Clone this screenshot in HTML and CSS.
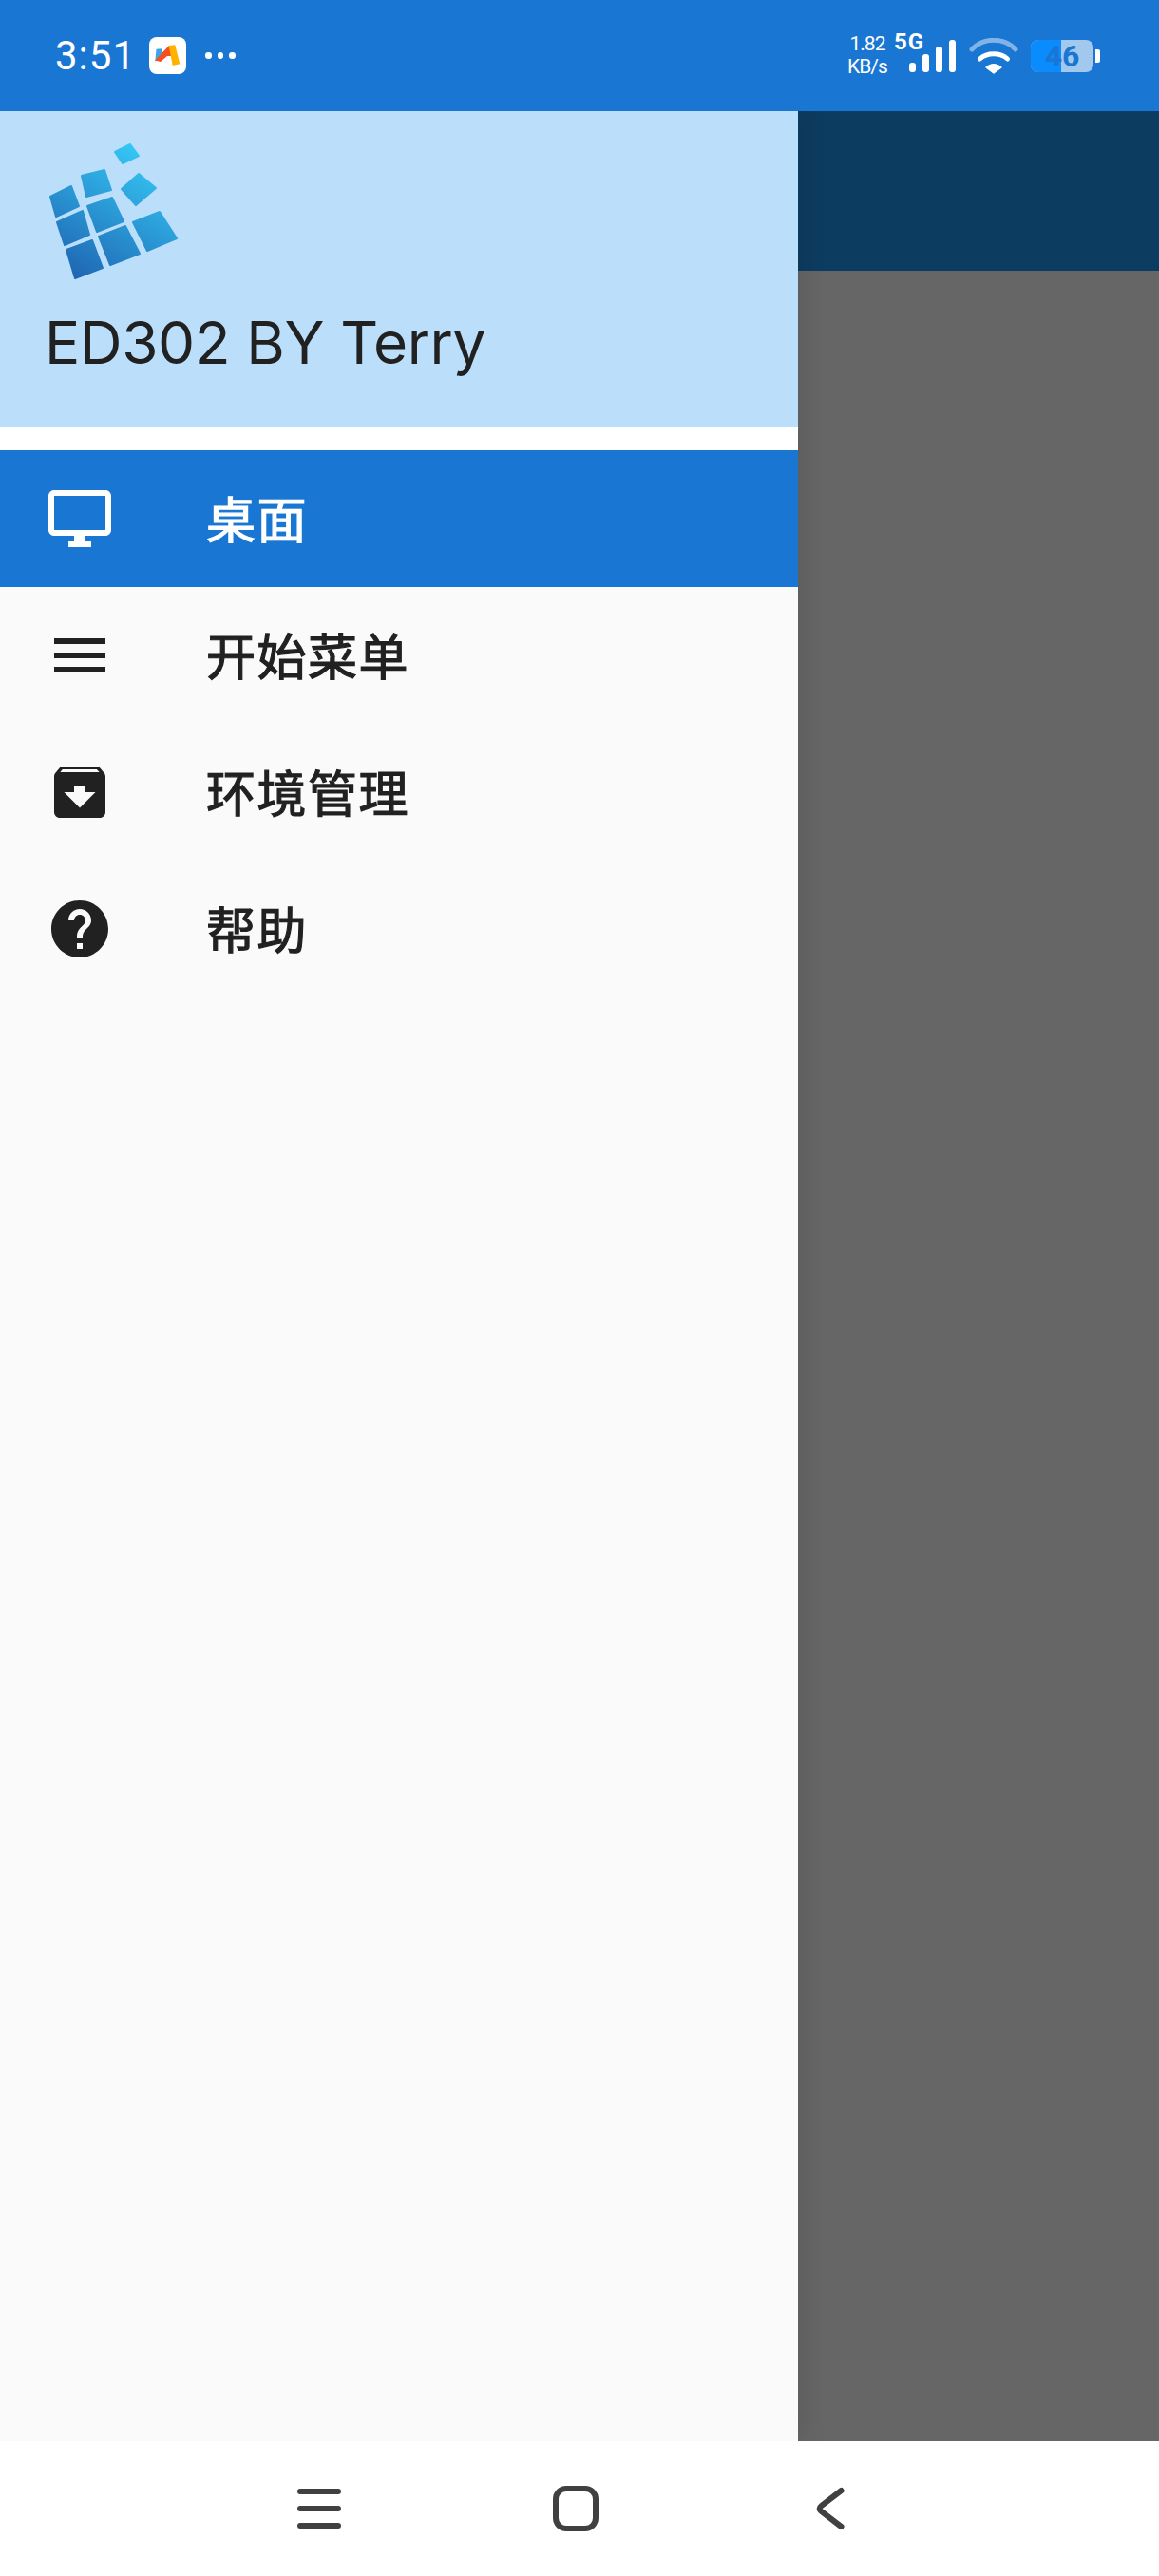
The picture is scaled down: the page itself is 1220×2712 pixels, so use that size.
FILE: index.html
```html
<!DOCTYPE html>
<html lang="zh-CN">

<head>
    <meta charset="UTF-8">
    <meta name="viewport" content="width=device-width, initial-scale=1.0">
    <title>ED302 BY Terry</title>
    <link rel="stylesheet" href="styles.css">
</head>

<body>
    <!-- Status bar -->
    <div class="status-bar">
        <div class="status-left">
            <span class="clock">3:51</span>
            <span class="app-badge">
                <svg viewBox="0 0 39 39" width="39" height="39">
                    <polygon points="7.500,12.700 13.700,12.300 13.700,20 6.300,25.700" fill="#3aa6e8"/>
                    <polygon points="6,24.500 21,9 24,20 19,20 12,26" fill="#f4511e"/>
                    <polygon points="20.700,9 27.300,8.300 32.300,28.300 24.700,30" fill="#ffb300"/>
                </svg>
            </span>
            <span class="dots"><i></i><i></i><i></i></span>
        </div>
        <div class="status-right">
            <div class="speed"><span>1.82</span><span>KB/s</span></div>
            <div class="signal">
                <span class="five-g">5G</span>
                <div class="bars"><i class="b1"></i><i class="b2"></i><i class="b3"></i><i class="b4"></i></div>
            </div>
            <svg class="wifi" viewBox="0 0 52 38" width="52" height="38">
                <path d="M3 12C15 -1 37 -1 49 12" fill="none" stroke="#fff" stroke-opacity=".45" stroke-width="5" stroke-linecap="round"/>
                <path d="M11.500 22C19 15 33 15 40.500 22" fill="none" stroke="#fff" stroke-width="5" stroke-linecap="round"/>
                <path d="M18 31C23 26.500 29 26.500 34 31L26 37z" fill="#fff" stroke="#fff" stroke-width="1.500" stroke-linejoin="round"/>
            </svg>
            <div class="battery">
                <div class="battery-body">
                    <div class="battery-fill"></div>
                    <span class="battery-num">46</span>
                </div>
                <div class="battery-tip"></div>
            </div>
        </div>
    </div>

    <div class="screen">
        <!-- Drawer -->
        <div class="drawer">
            <div class="drawer-header">
                <svg class="logo" viewBox="0 0 200 180" width="200" height="180">
                    <defs>
                        <linearGradient id="tile" gradientUnits="userSpaceOnUse" x1="55" y1="165" x2="135" y2="30">
                            <stop offset="0" stop-color="#1e63b0"/>
                            <stop offset="1" stop-color="#35c8f6"/>
                        </linearGradient>
                    </defs>
                    <g fill="url(#tile)" stroke="url(#tile)" stroke-width="2" stroke-linejoin="round">
                        <polygon points="101,30 117,22 126,34 109,42"/>
                        <polygon points="108,69 126,53 144,68 123,86"/>
                        <polygon points="66,55 90,49 97,70 71,77"/>
                        <polygon points="33,77 55,66 63,87 39,98"/>
                        <polygon points="72,87 98,78 110,103 82,114"/>
                        <polygon points="120,104 148,93 166,121 135,134"/>
                        <polygon points="40,104 67,92 74,117 48,128"/>
                        <polygon points="84,119 112,108 127,137 96,149"/>
                        <polygon points="50,133 77,123 88,152 59,163"/>
                    </g>
                </svg>
                <div class="drawer-title">ED302 BY Terry</div>
            </div>
            <ul class="menu">
                <li class="menu-item selected">
                    <svg viewBox="0 0 24 24" width="72" height="72"><path d="M21 2H3c-1.1 0-2 .9-2 2v12c0 1.1.9 2 2 2h7v2H8v2h8v-2h-2v-2h7c1.1 0 2-.9 2-2V4c0-1.1-.9-2-2-2zm0 14H3V4h18v12z"/></svg>
                    <span>桌面</span>
                </li>
                <li class="menu-item">
                    <svg viewBox="0 0 24 24" width="72" height="72"><path d="M3 18h18v-2H3v2zm0-5h18v-2H3v2zm0-7v2h18V6H3z"/></svg>
                    <span>开始菜单</span>
                </li>
                <li class="menu-item">
                    <svg viewBox="0 0 24 24" width="72" height="72"><path d="M20.54 5.23l-1.39-1.68C18.88 3.21 18.47 3 18 3H6c-.47 0-.88.21-1.16.55L3.46 5.23C3.17 5.57 3 6.02 3 6.5V19c0 1.1.9 2 2 2h14c1.1 0 2-.9 2-2V6.5c0-.48-.17-.93-.46-1.27zM12 17.5L6.5 12H10v-2h4v2h3.5L12 17.5zM5.12 5l.81-1h12l.94 1H5.12z"/></svg>
                    <span>环境管理</span>
                </li>
                <li class="menu-item">
                    <svg viewBox="0 0 24 24" width="72" height="72"><path d="M12 2C6.48 2 2 6.48 2 12s4.48 10 10 10 10-4.48 10-10S17.52 2 12 2zm1 17h-2v-2h2v2zm2.07-7.75l-.9.92C13.45 12.9 13 13.5 13 15h-2v-.5c0-1.1.45-2.1 1.17-2.83l1.24-1.26c.37-.36.59-.86.59-1.41 0-1.1-.9-2-2-2s-2 .9-2 2H8c0-2.21 1.79-4 4-4s4 1.79 4 4c0 .88-.36 1.68-.93 2.25z"/></svg>
                    <span>帮助</span>
                </li>
            </ul>
        </div>
        <!-- Dimmed page behind the drawer -->
        <div class="scrim">
            <div class="scrim-appbar"></div>
            <div class="scrim-body"></div>
        </div>
    </div>

    <!-- Navigation bar -->
    <div class="nav-bar">
        <svg viewBox="0 0 46 42" width="46" height="42">
            <path d="M3 3h40M3 21h40M3 39h40" fill="none" stroke="#404040" stroke-width="6" stroke-linecap="round"/>
        </svg>
        <svg class="nav-home" viewBox="0 0 48 48" width="48" height="48">
            <rect x="3" y="3" width="42" height="42" rx="11" fill="none" stroke="#404040" stroke-width="6"/>
        </svg>
        <svg class="nav-back" viewBox="0 0 30 48" width="30" height="48">
            <path d="M26.500 5L5.500 21c-2.500 2-2.500 4 0 6L26.500 43" fill="none" stroke="#404040" stroke-width="6" stroke-linecap="round"/>
        </svg>
    </div>
</body>

</html>
```

FILE: styles.css
```css
* {
    box-sizing: border-box;
}

html,
body {
    margin: 0;
    height: 100%;
}

body {
    display: flex;
    flex-direction: column;
    height: 2712px;
    overflow: hidden;
    font-family: Roboto, "Noto Sans CJK SC", sans-serif;
}

.status-bar {
    position: relative;
    z-index: 2;
    display: flex;
    justify-content: space-between;
    height: 117px;
    background-color: #1976d2;
    color: #fff;
}

.status-left {
    display: flex;
    align-items: center;
    padding-left: 58px;
}

.clock {
    width: 99px;
    font-size: 42px;
    letter-spacing: 1px;
}

.app-badge {
    display: flex;
    width: 39px;
    height: 39px;
    background-color: #fff;
    border-radius: 8px;
}

.dots {
    display: flex;
    gap: 6px;
    margin-left: 20px;
}

.dots i {
    width: 6.5px;
    height: 6.5px;
    border-radius: 50%;
    background-color: #fff;
}

.status-right {
    display: flex;
    align-items: flex-start;
    padding: 34px 62px 0 0;
}

.speed {
    display: flex;
    flex-direction: column;
    align-items: center;
    width: 42px;
    font-size: 21px;
    line-height: 24px;
    letter-spacing: -1px;
}

.signal {
    position: relative;
    width: 65px;
    height: 40px;
    margin: 2px 0 0 7px;
}

.five-g {
    position: absolute;
    left: 0;
    top: -2px;
    font-size: 24px;
    font-weight: 700;
    line-height: 20px;
    letter-spacing: 1px;
}

.bars {
    display: flex;
    align-items: flex-end;
    gap: 7.5px;
    height: 40px;
    padding: 6px 0 0 16px;
}

.bars i {
    width: 6.5px;
    background-color: #fff;
    border-radius: 3px;
}

.bars .b1 { height: 10px; }
.bars .b2 { height: 19px; }
.bars .b3 { height: 27px; }
.bars .b4 { height: 34px; }

.wifi {
    margin: 6px 0 0 14px;
}

.battery {
    display: flex;
    align-items: center;
    margin: 8px 0 0 13px;
}

.battery-body {
    position: relative;
    display: flex;
    align-items: center;
    justify-content: center;
    width: 66px;
    height: 34px;
    background-color: rgba(255, 255, 255, 0.6);
    border-radius: 8px;
}

.battery-fill {
    position: absolute;
    left: 0;
    top: 0;
    bottom: 0;
    width: 32px;
    background-color: #0a8cff;
    border-radius: 8px 0 0 8px;
}

.battery-num {
    position: relative;
    font-size: 32px;
    font-weight: 700;
    color: #1976d2;
    line-height: 34px;
}

.battery-tip {
    width: 5px;
    height: 14px;
    margin-left: 2px;
    background-color: #fff;
    border-radius: 0 2px 2px 0;
}

.screen {
    display: flex;
    flex: 1;
    min-height: 0;
}

.drawer {
    position: relative;
    display: flex;
    flex-direction: column;
    width: 840px;
    background-color: #fafafa;
    box-shadow: 6px 0 24px rgba(0, 0, 0, 0.1);
}

.drawer-header {
    height: 333px;
    padding: 13px 0 0 20px;
    background-color: #bbdefb;
}

.logo {
    display: block;
    height: 180px;
}

.drawer-title {
    margin-top: 12px;
    padding-left: 27px;
    font-family: Inter, sans-serif;
    font-size: 62px;
    line-height: 78px;
    letter-spacing: -0.4px;
    color: #212121;
}

.menu {
    list-style: none;
    margin: 0;
    padding: 24px 0 0;
    background: linear-gradient(to bottom, #fff 24px, #fafafa 24px);
}

.menu-item {
    display: flex;
    align-items: center;
    height: 144px;
    padding-left: 48px;
    color: #212121;
    fill: #212121;
}

.menu-item span {
    margin: -4px 0 0 97px;
    font-size: 52px;
    letter-spacing: 1.5px;
    -webkit-text-stroke: 1.2px currentColor;
}

.menu-item.selected {
    background-color: #1976d2;
    color: #fff;
    fill: #fff;
}

.scrim {
    display: flex;
    flex-direction: column;
    flex: 1;
}

.scrim-appbar {
    height: 168px;
    background-color: #0d3c61;
}

.scrim-body {
    flex: 1;
    background-color: #666;
}

.nav-bar {
    position: relative;
    z-index: 2;
    display: flex;
    align-items: center;
    height: 142px;
    padding-left: 313px;
    background-color: #fff;
}

.nav-home {
    margin-left: 223px;
}

.nav-back {
    margin-left: 229px;
}
```
